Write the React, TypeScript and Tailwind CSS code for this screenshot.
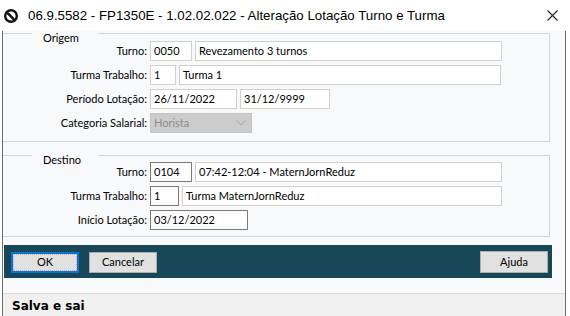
import React from "react";

type FieldProps = {
  value: string;
  width: string;
  active?: boolean;
};

function Field({ value, width, active }: FieldProps) {
  return (
    <div
      className={`${width} h-[20px] bg-white border flex items-center px-[3px] text-[11px] text-black whitespace-nowrap overflow-hidden ${
        active ? "border-[#7a7a7a]" : "border-[#d0d0d0]"
      }`}
    >
      {value}
    </div>
  );
}

function Row({ label, children }: { label: string; children: React.ReactNode }) {
  return (
    <div className="flex h-[20px] items-center">
      <div className="w-[145px] text-right text-[11px] text-black pr-[1px]">{label}</div>
      <div className="flex gap-[3px] ml-[2px]">{children}</div>
    </div>
  );
}

function Group({ title, children, className }: { title: string; children: React.ReactNode; className: string }) {
  return (
    <div className={`relative w-[547px] border-t border-r border-b border-[#d5d5d5] ${className}`}>
      <span className="absolute left-[29px] -top-[4px] w-[66px] pl-[11px] bg-[#f8f9fb] text-[11px] leading-[16px] text-black">
        {title}
      </span>
      {children}
    </div>
  );
}

export default function App() {
  return (
    <div
      className="w-[570px] h-[316px] bg-white overflow-hidden flex flex-col"
      style={{ fontFamily: 'Lato, "Liberation Sans", Arial, sans-serif' }}
    >
      {/* title bar */}
      <div className="h-[31px] flex items-center pl-[4px] pr-[12px] shrink-0">
        <svg width="14" height="14" viewBox="0 0 14 14">
          <circle cx="7" cy="7" r="5.8" fill="none" stroke="#111" strokeWidth="2.4" />
          <path d="M4.2 4.6 L9.4 9.8" stroke="#111" strokeWidth="2.6" strokeLinecap="round" />
        </svg>
        <span
          className="ml-[10px] text-[13.3px] text-black"
          style={{ fontFamily: '"Liberation Sans", Arial, sans-serif' }}
        >
          06.9.5582 - FP1350E - 1.02.02.022 - Alteração Lotação Turno e Turma
        </span>
        <svg className="ml-auto" width="11" height="11" viewBox="0 0 11 11">
          <path d="M0.5 0.5 L10.5 10.5 M10.5 0.5 L0.5 10.5" stroke="#222" strokeWidth="1.1" />
        </svg>
      </div>

      {/* window body */}
      <div className="ml-[2px] w-[564px] flex-1 border-l border-r border-[#6e6e6e] bg-[#f8f9fb] flex flex-col">
        <div className="pt-[2px]">
          <Group title="Origem" className="pt-[7px] pb-[8px] flex flex-col gap-[4px]">
            <Row label="Turno:">
              <Field value="0050" width="w-[42px]" />
              <Field value="Revezamento 3 turnos" width="w-[307px]" />
            </Row>
            <Row label="Turma Trabalho:">
              <Field value="1" width="w-[26px]" />
              <Field value="Turma 1" width="w-[322px]" />
            </Row>
            <Row label="Período Lotação:">
              <Field value="26/11/2022" width="w-[87px]" />
              <Field value="31/12/9999" width="w-[90px]" />
            </Row>
            <Row label="Categoria Salarial:">
              <div className="w-[102px] h-[20px] bg-[#cccccc] border border-[#c4c4c4] flex items-center justify-between px-[3px] text-[11px] text-[#8c8c8c]">
                <span>Horista</span>
                <svg width="10" height="6" viewBox="0 0 10 6" className="mr-[2px]">
                  <path d="M0.5 0.5 L5 5 L9.5 0.5" fill="none" stroke="#a8a8a8" strokeWidth="1" />
                </svg>
              </div>
            </Row>
          </Group>
        </div>

        <div className="pt-[13px]">
          <Group title="Destino" className="pt-[6px] pb-[6px] flex flex-col gap-[4px]">
            <Row label="Turno:">
              <Field value="0104" width="w-[42px]" active />
              <Field value="07:42-12:04 - MaternJornReduz" width="w-[307px]" />
            </Row>
            <Row label="Turma Trabalho:">
              <Field value="1" width="w-[29px]" active />
              <Field value="Turma MaternJornReduz" width="w-[320px]" />
            </Row>
            <Row label="Início Lotação:">
              <Field value="03/12/2022" width="w-[98px]" active />
            </Row>
          </Group>
        </div>

        {/* button bar */}
        <div className="mt-[8px] ml-[1px] w-[548px] h-[33px] bg-[#19475a] flex items-start pt-[7px] pl-[7px] pr-[4px]">
          <button className="w-[68px] h-[21px] bg-[#e1e1e1] border-2 border-[#0078d7] flex items-center justify-center text-[11px] text-black">
            <span className="w-full h-full border border-dotted border-[#e59aa8] flex items-center justify-center">OK</span>
          </button>
          <button className="ml-[10px] w-[68px] h-[21px] bg-[#e1e1e1] border border-[#adadad] flex items-center justify-center text-[11px] text-black">
            Cancelar
          </button>
          <button className="ml-auto -mt-[1px] w-[68px] h-[22px] bg-[#e1e1e1] border border-[#adadad] flex items-center justify-center text-[11px] text-black">
            Ajuda
          </button>
        </div>

        {/* status bar */}
        <div className="mt-[15px] flex-1 border-t border-[#d9d9d9] bg-[#f0f0f0] flex items-center pl-[9px] pt-[1px]">
          <span
            className="text-[12px] font-bold text-black"
            style={{ fontFamily: '"DejaVu Sans", Verdana, sans-serif' }}
          >
            Salva e sai
          </span>
        </div>
      </div>
    </div>
  );
}
